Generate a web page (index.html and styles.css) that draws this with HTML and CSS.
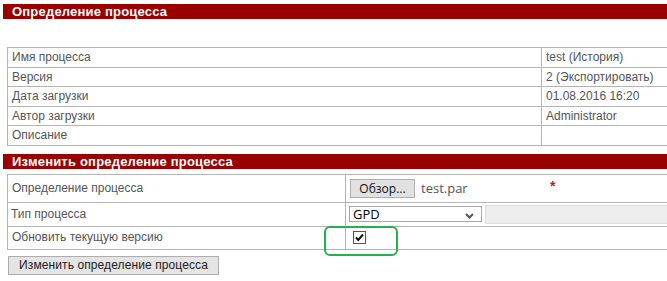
FILE: index.html
```html
<!DOCTYPE html>
<html lang="ru">
<head>
<meta charset="UTF-8" />
<title>Определение процесса</title>
<link rel="stylesheet" href="styles.css">
</head>
<body>
<div class="page">
  <h2 class="section-title">Определение процесса</h2>
  <table class="info">
    <tr><td class="label">Имя процесса</td><td>test (История)</td></tr>
    <tr><td class="label">Версия</td><td>2 (Экспортировать)</td></tr>
    <tr><td class="label">Дата загрузки</td><td>01.08.2016 16:20</td></tr>
    <tr><td class="label">Автор загрузки</td><td>Administrator</td></tr>
    <tr><td class="label">Описание</td><td></td></tr>
  </table>

  <h2 class="section-title second">Изменить определение процесса</h2>
  <form class="edit-form">
    <table class="edit">
      <tr class="row-file">
        <td class="label">Определение процесса</td>
        <td>
          <div class="field">
            <span class="file-area">
              <button type="button" class="browse">Обзор...</button>
              <span class="file-name">test.par</span>
            </span>
            <span class="required">*</span>
          </div>
        </td>
      </tr>
      <tr class="row-type">
        <td class="label">Тип процесса</td>
        <td>
          <div class="field">
            <span class="select">
              <span class="select-value">GPD</span>
              <svg width="9" height="6" viewBox="0 0 9 6"><path d="M1 1 L4.5 4.5 L8 1" fill="none" stroke="#555" stroke-width="2"/></svg>
            </span>
            <span class="disabled-input"></span>
          </div>
        </td>
      </tr>
      <tr class="row-check">
        <td class="label">Обновить текущую версию</td>
        <td>
          <span class="checkbox">
            <svg width="13" height="13" viewBox="0 0 13 13"><rect x="0.5" y="0.5" width="12" height="12" fill="#fff" stroke="#555"/><path d="M3 6.5 L5.3 9 L10 3.5" fill="none" stroke="#111" stroke-width="2"/></svg>
          </span>
        </td>
      </tr>
    </table>
    <button type="button" class="submit">Изменить определение процесса</button>
  </form>
  <div class="highlight"></div>
</div>
</body>
</html>
```

FILE: styles.css
```css
* {
  box-sizing: border-box;
}

body {
  margin: 0;
  background: #fff;
  font-family: "Liberation Sans", Arial, sans-serif;
  font-size: 12px;
  color: #555;
  overflow: hidden;
}

.page {
  position: relative;
  width: 700px;
  padding-top: 4px;
}

.section-title {
  margin: 0 0 0 3px;
  height: 15px;
  line-height: 15px;
  padding-left: 9px;
  background: #990000;
  color: #fff;
  font-size: 13px;
  font-weight: bold;
  letter-spacing: 0.2px;
}

.section-title.second {
  margin-top: 8px;
}

table {
  border-collapse: collapse;
  margin-left: 7px;
  table-layout: fixed;
}

td {
  border: 1px solid #b4b4b4;
  padding: 2px 3px 2px 4px;
  line-height: 14.5px;
  vertical-align: middle;
}

.info {
  width: 690px;
  margin-top: 28px;
}

.info td.label {
  width: 534px;
}

.edit {
  width: 690px;
  margin-top: 5px;
}

.edit td.label {
  width: 338px;
}

.edit td {
  padding-left: 4px;
}

.row-file td {
  height: 28px;
}

.row-type td {
  height: 24px;
  padding-left: 3px;
}

.row-check td {
  height: 23px;
}

.field {
  display: flex;
  align-items: center;
}

.file-area {
  display: flex;
  align-items: center;
  width: 200px;
}

.browse {
  height: 19px;
  width: 65px;
  padding: 0;
  border: 1px solid #adadad;
  background: #e1e1e1;
  color: #111;
  font-family: "Open Sans", sans-serif;
  font-size: 12px;
  line-height: 17px;
}

.file-name {
  margin-left: 6px;
  font-family: "Open Sans", sans-serif;
  font-size: 13px;
  color: #555;
}

.required {
  align-self: flex-start;
  margin-top: 1px;
  color: #b22;
  font-size: 14px;
  font-weight: bold;
  line-height: 12px;
}

.select {
  display: flex;
  align-items: center;
  justify-content: space-between;
  width: 133px;
  height: 16px;
  padding: 0 7px 0 3px;
  border: 1px solid #a9a9a9;
  background: #fff;
  color: #000;
  font-family: "Open Sans", sans-serif;
  font-size: 13px;
}

.select svg {
  margin-top: 3px;
}

.disabled-input {
  flex: 1;
  height: 19px;
  margin-left: 3px;
  background: #eee;
  border: 1px solid #ddd;
}

.checkbox {
  display: block;
  width: 13px;
  height: 13px;
  margin-left: 3px;
}

.checkbox svg {
  display: block;
}

.submit {
  display: block;
  margin: 6px 0 0 8px;
  width: 211px;
  height: 19px;
  padding: 0;
  border: 1px solid #adadad;
  background: #e4e4e4;
  color: #222;
  font-family: "Liberation Sans", Arial, sans-serif;
  font-size: 12px;
  letter-spacing: 0.1px;
}

.highlight {
  position: absolute;
  left: 324px;
  top: 226px;
  width: 74px;
  height: 30px;
  border: 2px solid #22b14c;
  border-radius: 6px;
}
```
